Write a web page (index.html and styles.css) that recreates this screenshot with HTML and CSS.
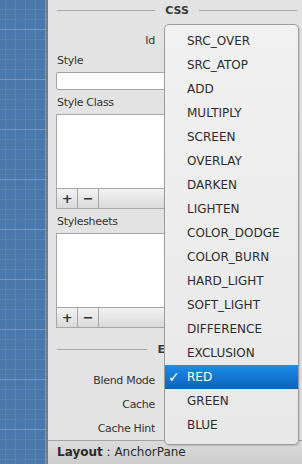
FILE: index.html
```html
<!DOCTYPE html>
<html lang="en">

<head>
    <meta charset="UTF-8">
    <meta name="viewport" content="width=device-width, initial-scale=1.0">
    <title>Inspector - CSS</title>
    <link rel="stylesheet" href="styles.css">
</head>

<body>
    <div class="window">
        <div class="canvas"></div>
        <div class="divider"></div>
        <div class="side">
            <div class="inspector">
                <div class="section-head"><span>CSS</span></div>
                <div class="prop-row first"><label>Id</label></div>

                <div class="field-label">Style</div>
                <div class="textbox"></div>

                <div class="field-label">Style Class</div>
                <div class="listbox">
                    <div class="list-area"></div>
                    <div class="list-buttons">
                        <span class="btn">+</span>
                        <span class="btn">&minus;</span>
                        <span class="filler"></span>
                    </div>
                </div>

                <div class="field-label">Stylesheets</div>
                <div class="listbox">
                    <div class="list-area"></div>
                    <div class="list-buttons">
                        <span class="btn">+</span>
                        <span class="btn">&minus;</span>
                        <span class="filler"></span>
                    </div>
                </div>

                <div class="section-head extras"><span>Extras</span></div>
                <div class="prop-row blend"><label>Blend Mode</label></div>
                <div class="prop-row"><label>Cache</label></div>
                <div class="prop-row"><label>Cache Hint</label></div>
            </div>
            <div class="status"><b>Layout</b> : AnchorPane</div>
        </div>

        <!-- blend mode dropdown, open -->
        <ul class="popup">
            <li>SRC_OVER</li>
            <li>SRC_ATOP</li>
            <li>ADD</li>
            <li>MULTIPLY</li>
            <li>SCREEN</li>
            <li>OVERLAY</li>
            <li>DARKEN</li>
            <li>LIGHTEN</li>
            <li>COLOR_DODGE</li>
            <li>COLOR_BURN</li>
            <li>HARD_LIGHT</li>
            <li>SOFT_LIGHT</li>
            <li>DIFFERENCE</li>
            <li>EXCLUSION</li>
            <li class="selected"><span class="check">&#10003;</span>RED</li>
            <li>GREEN</li>
            <li>BLUE</li>
        </ul>
    </div>
</body>

</html>
```

FILE: styles.css
```css
body {
    margin: 0;
    padding: 0;
    font-family: "DejaVu Sans", sans-serif;
    color: #333;
}

.window {
    position: relative;
    display: flex;
    width: 302px;
    height: 464px;
    overflow: hidden;
}

.canvas {
    width: 46px;
    background-color: #4a78aa;
    background-image:
        linear-gradient(rgba(255, 255, 255, 0.16) 1px, transparent 1px),
        linear-gradient(90deg, rgba(255, 255, 255, 0.16) 1px, transparent 1px),
        linear-gradient(rgba(255, 255, 255, 0.07) 1px, transparent 1px),
        linear-gradient(90deg, rgba(255, 255, 255, 0.07) 1px, transparent 1px);
    background-size: 50px 50px, 50px 50px, 10px 10px, 10px 10px;
    background-position: 0 -21px, -5px 0, 0 -1px, -5px 0;
}

.divider {
    width: 2px;
    background: #7b7b7b;
}

.side {
    flex: 1;
    display: flex;
    flex-direction: column;
    background: #e3e3e3;
}

.inspector {
    flex: 1;
    padding: 0 5px 0 8px;
    font-size: 11px;
    letter-spacing: -0.3px;
}

.section-head {
    display: flex;
    align-items: center;
    height: 20px;
    margin-left: 1px;
    font-weight: bold;
    font-size: 11px;
    letter-spacing: 0;
    color: #3a3a3a;
}

.section-head::before,
.section-head::after {
    content: "";
    flex: 1;
    height: 1px;
    background: #a9a9a9;
}

.section-head span {
    padding: 0 10px;
}

.section-head.extras {
    margin-top: 11px;
}

.prop-row {
    display: flex;
    align-items: center;
    height: 20px;
    margin-top: 4px;
}

.prop-row label {
    width: 99px;
    text-align: right;
}

.prop-row.first {
    margin-top: 10px;
}

.prop-row.blend {
    margin-top: 11px;
}

.field-label {
    height: 18px;
    line-height: 18px;
    margin-top: 2px;
    padding-left: 1px;
}

.textbox {
    height: 16px;
    margin-top: 2px;
    background: #fff;
    border: 1px solid #a3a3a3;
    border-radius: 2px;
}

.textbox + .field-label,
.listbox + .field-label {
    margin-top: 4px;
}

.listbox {
    margin-top: 2px;
    border: 1px solid #a6a6a6;
}

.list-area {
    height: 73px;
    background: #fff;
    border-bottom: 1px solid #a6a6a6;
}

.list-buttons {
    display: flex;
    height: 19px;
    background: linear-gradient(#f2f2f2, #dadada);
}

.btn {
    width: 20px;
    border-right: 1px solid #a6a6a6;
    text-align: center;
    line-height: 19px;
    font-size: 13px;
    font-weight: bold;
    color: #333;
}

.filler {
    flex: 1;
}

.status {
    height: 23px;
    line-height: 23px;
    padding-left: 9px;
    border-top: 1px solid #a4a4a4;
    background: linear-gradient(#dcdcdc, #cdcdcd);
    font-size: 12px;
    color: #2b2b2b;
}

/* dropdown over the right column */
.popup {
    position: absolute;
    left: 164px;
    top: 24px;
    width: 133px;
    margin: 0;
    padding: 4px 0 7px;
    list-style: none;
    border: 1px solid #9c9c9c;
    border-radius: 5px;
    background: linear-gradient(#f1f1f1, #e8e8e8);
    box-shadow: 1px 1px 2px rgba(0, 0, 0, 0.15);
}

.popup li {
    position: relative;
    height: 24px;
    line-height: 24px;
    padding-left: 22px;
    font-size: 12px;
    color: #2c2c2c;
}

.popup li.selected {
    background: linear-gradient(#1c8de9, #0b62bb);
    color: #fff;
}

.check {
    position: absolute;
    left: 3px;
    top: 0;
    font-size: 14px;
}
```
